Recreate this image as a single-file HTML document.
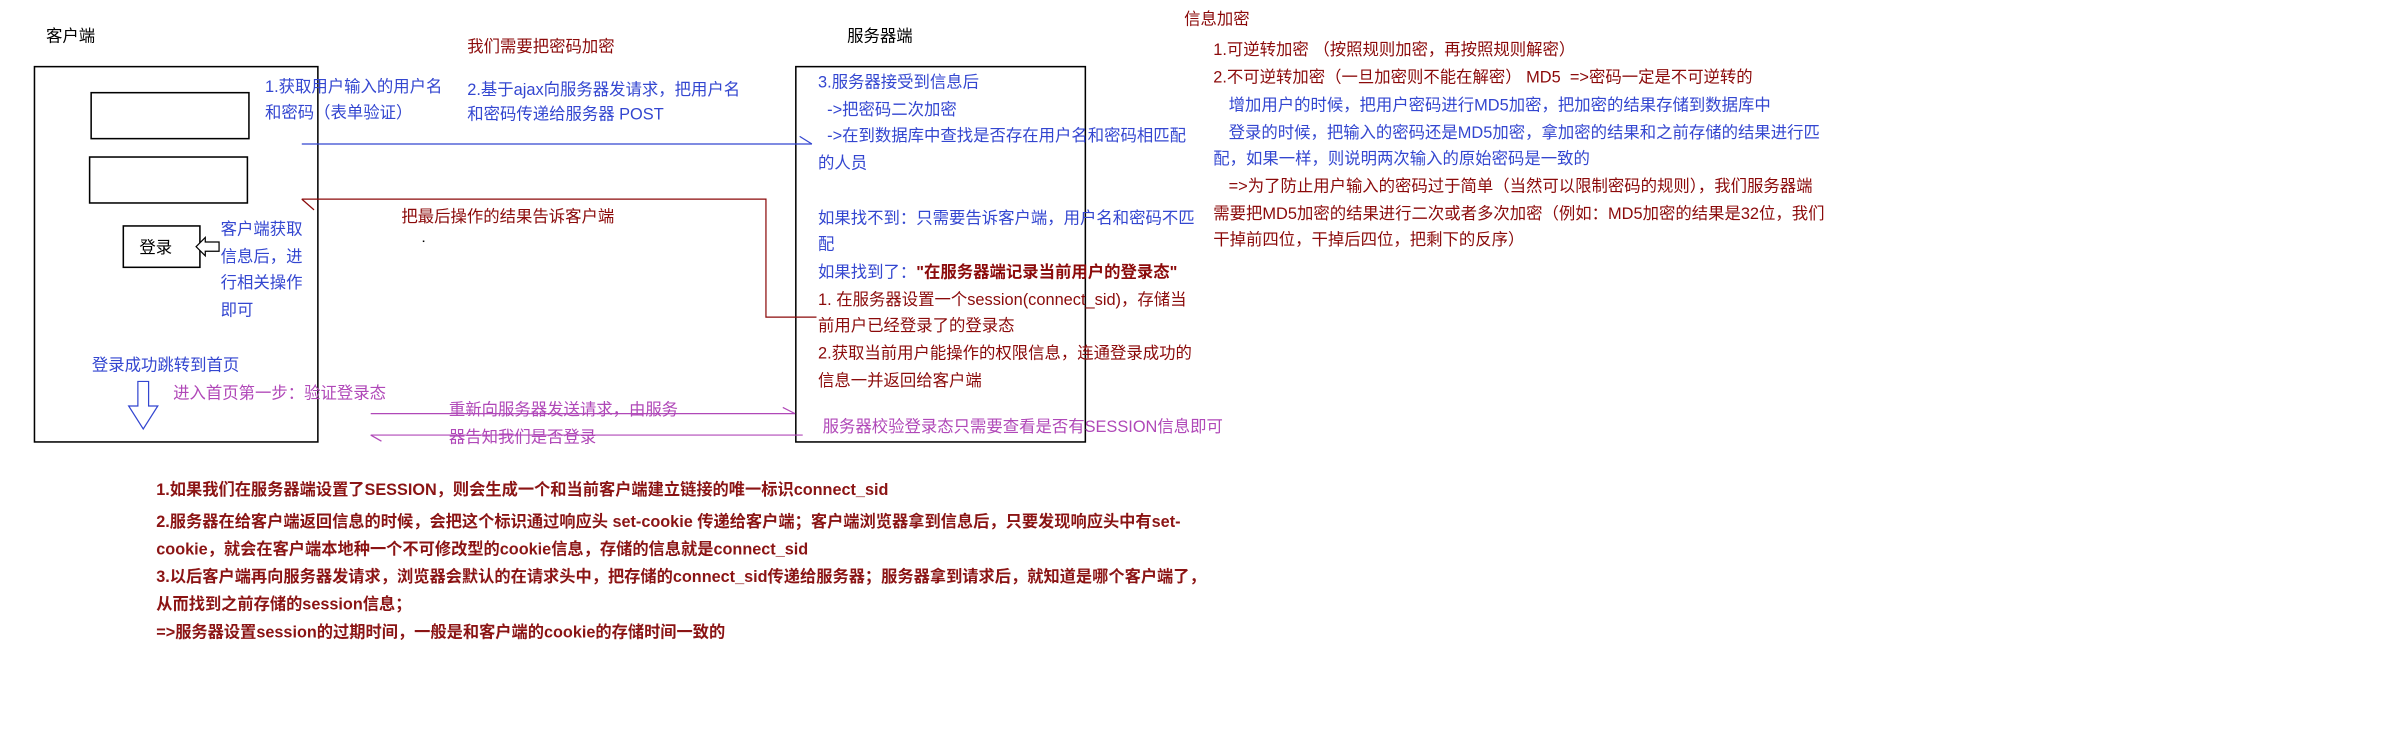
<!DOCTYPE html>
<html><head><meta charset="utf-8">
<style>
html,body{margin:0;padding:0;background:#fff;width:2402px;height:754px;overflow:hidden}
#c{position:absolute;left:0;top:0;width:1568px;height:492px;transform:scale(1.5319);transform-origin:0 0;font-family:"Liberation Sans","Noto Sans CJK SC","WenQuanYi Zen Hei",sans-serif;font-size:10.7px}
.t{position:absolute;white-space:nowrap;line-height:16px}
.b{color:#3346d0}.r{color:#8b0a0a}.p{color:#b048b8}.k{color:#000}
.box{position:absolute;border:1px solid #000;box-sizing:border-box}
.bd{font-weight:bold;color:#8b1414;font-size:10.6px}
svg{position:absolute;left:0;top:0}
</style></head><body><div id="c">
<div class="t k" style="left:30px;top:16px">客户端</div>
<div class="t k" style="left:553px;top:16px">服务器端</div>
<div class="box" style="left:22px;top:43px;width:186px;height:246px"></div>
<div class="box" style="left:59px;top:60px;width:104px;height:31px"></div>
<div class="box" style="left:58px;top:102px;width:104px;height:31px"></div>
<div class="box" style="left:80px;top:147px;width:51px;height:28px"></div>
<div class="t k" style="left:91px;top:154px">登录</div>
<div class="box" style="left:519px;top:43px;width:190px;height:246px"></div>

<svg width="1568" height="492">
<line x1="197" y1="94" x2="530" y2="94" stroke="#3346d0" stroke-width="0.8"/>
<line x1="522" y1="89" x2="530" y2="94" stroke="#3346d0" stroke-width="0.8"/>
<polyline points="197,130 500,130 500,207 533,207" fill="none" stroke="#8b0a0a" stroke-width="0.8"/>
<line x1="197" y1="130" x2="205" y2="137" stroke="#8b0a0a" stroke-width="0.8"/>
<line x1="242" y1="270" x2="519" y2="270" stroke="#b048b8" stroke-width="0.8"/>
<line x1="511" y1="266" x2="519" y2="270" stroke="#b048b8" stroke-width="0.8"/>
<line x1="242" y1="284" x2="524" y2="284" stroke="#b048b8" stroke-width="0.8"/>
<line x1="242" y1="284" x2="249" y2="288" stroke="#b048b8" stroke-width="0.8"/>
<polygon points="128,161 134,155 134,158 143,158 143,164 134,164 134,167" fill="#fff" stroke="#000" stroke-width="0.8"/>
<polygon points="90,249 97,249 97,265 103,265 93.5,280 84,265 90,265" fill="#fff" stroke="#3346d0" stroke-width="0.8"/>
<rect x="276" y="157" width="1" height="1" fill="#000"/>
</svg>

<div class="t b" style="left:173px;top:49px">1.获取用户输入的用户名</div>
<div class="t b" style="left:173px;top:66px">和密码（表单验证）</div>
<div class="t r" style="left:305px;top:23px">我们需要把密码加密</div>
<div class="t b" style="left:305px;top:51px">2.基于ajax向服务器发请求，把用户名</div>
<div class="t b" style="left:305px;top:67px">和密码传递给服务器 POST</div>
<div class="t r" style="left:262px;top:134px">把最后操作的结果告诉客户端</div>
<div class="t b" style="left:144px;top:142px;line-height:17.6px">客户端获取<br>信息后，进<br>行相关操作<br>即可</div>
<div class="t b" style="left:60px;top:231px">登录成功跳转到首页</div>
<div class="t p" style="left:113px;top:249px">进入首页第一步：验证登录态</div>
<div class="t p" style="left:293px;top:260px">重新向服务器发送请求，由服务</div>
<div class="t p" style="left:293px;top:278px">器告知我们是否登录</div>

<div class="t b" style="left:534px;top:46px;line-height:17.7px">3.服务器接受到信息后<br>&nbsp;&nbsp;-&gt;把密码二次加密<br>&nbsp;&nbsp;-&gt;在到数据库中查找是否存在用户名和密码相匹配<br>的人员<br><br>如果找不到：只需要告诉客户端，用户名和密码不匹<br>配<br>如果找到了：<b class="r">"在服务器端记录当前用户的登录态"</b><br><span class="r">1. 在服务器设置一个session(connect_sid)，存储当<br>前用户已经登录了的登录态<br>2.获取当前用户能操作的权限信息，连通登录成功的<br>信息一并返回给客户端</span></div>
<div class="t p" style="left:537px;top:271px">服务器校验登录态只需要查看是否有SESSION信息即可</div>

<div class="t r" style="left:773px;top:5px">信息加密</div>
<div class="t r" style="left:792px;top:25px">1.可逆转加密 （按照规则加密，再按照规则解密）</div>
<div class="t r" style="left:792px;top:43px">2.不可逆转加密（一旦加密则不能在解密） MD5&nbsp; =&gt;密码一定是不可逆转的</div>
<div class="t b" style="left:802px;top:61px">增加用户的时候，把用户密码进行MD5加密，把加密的结果存储到数据库中</div>
<div class="t b" style="left:802px;top:79px">登录的时候，把输入的密码还是MD5加密，拿加密的结果和之前存储的结果进行匹</div>
<div class="t b" style="left:792px;top:96px">配，如果一样，则说明两次输入的原始密码是一致的</div>
<div class="t r" style="left:802px;top:114px">=&gt;为了防止用户输入的密码过于简单（当然可以限制密码的规则），我们服务器端</div>
<div class="t r" style="left:792px;top:132px">需要把MD5加密的结果进行二次或者多次加密（例如：MD5加密的结果是32位，我们</div>
<div class="t r" style="left:792px;top:149px">干掉前四位，干掉后四位，把剩下的反序）</div>

<div class="t bd" style="left:102px;top:312px">1.如果我们在服务器端设置了SESSION，则会生成一个和当前客户端建立链接的唯一标识connect_sid</div>
<div class="t bd" style="left:102px;top:333px">2.服务器在给客户端返回信息的时候，会把这个标识通过响应头 set-cookie 传递给客户端；客户端浏览器拿到信息后，只要发现响应头中有set-</div>
<div class="t bd" style="left:102px;top:351px">cookie，就会在客户端本地种一个不可修改型的cookie信息，存储的信息就是connect_sid</div>
<div class="t bd" style="left:102px;top:369px">3.以后客户端再向服务器发请求，浏览器会默认的在请求头中，把存储的connect_sid传递给服务器；服务器拿到请求后，就知道是哪个客户端了，</div>
<div class="t bd" style="left:102px;top:387px">从而找到之前存储的session信息；</div>
<div class="t bd" style="left:102px;top:405px">=&gt;服务器设置session的过期时间，一般是和客户端的cookie的存储时间一致的</div>
</div></body></html>
